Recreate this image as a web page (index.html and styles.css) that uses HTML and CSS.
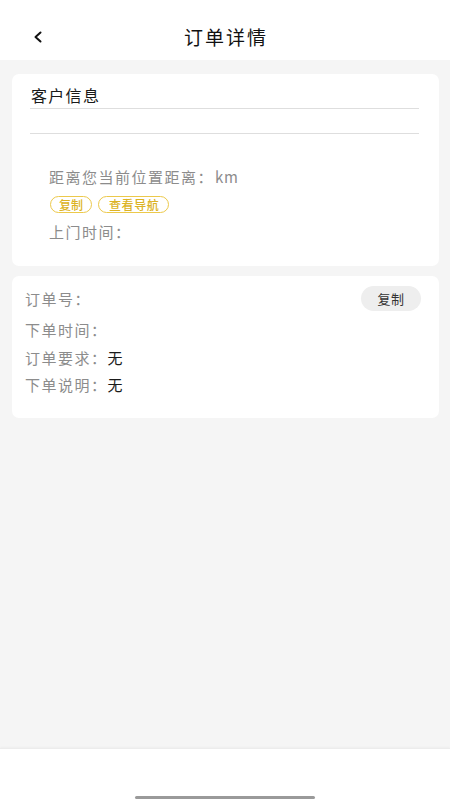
FILE: index.html
```html
<!DOCTYPE html>
<html lang="zh-CN">
<head>
<meta charset="utf-8">
<meta name="viewport" content="width=450, initial-scale=1">
<title>订单详情</title>
<link rel="stylesheet" href="styles.css">
</head>
<body>
<div class="page">
  <header class="topbar">
    <div class="back">
      <svg width="10" height="12" viewBox="0 0 10 12"><path d="M7.5 1.5 L2.5 6 L7.5 10.5" fill="none" stroke="#111" stroke-width="2" stroke-linecap="round" stroke-linejoin="round"/></svg>
    </div>
    <h1 class="title">订单详情</h1>
    <div></div>
  </header>

  <main class="content">
    <section class="card customer">
      <div class="cust-title">客户信息</div>
      <div class="cust-blank"></div>
      <div class="addr">
        <div class="muted line">距离您当前位置距离：<span class="unit">km</span></div>
        <div class="tags">
          <span class="tag">复制</span>
          <span class="tag">查看导航</span>
        </div>
        <div class="muted line visit">上门时间：</div>
      </div>
    </section>

    <section class="card order">
      <div class="row first">
        <span class="muted">订单号：</span>
        <span class="copy-btn">复制</span>
      </div>
      <div class="row"><span class="muted">下单时间：</span></div>
      <div class="row"><span class="muted">订单要求：</span><span class="val">无</span></div>
      <div class="row"><span class="muted">下单说明：</span><span class="val">无</span></div>
    </section>
  </main>

  <footer class="bottom">
    <div class="home-bar"></div>
  </footer>
</div>
</body>
</html>
```

FILE: styles.css
```css
* { box-sizing: border-box; }
html, body { margin: 0; padding: 0; }
body {
  font-family: "Noto Sans CJK SC", "Noto Sans", "Liberation Sans", sans-serif;
  background: #f5f5f5;
  color: #222;
}
.page {
  width: 450px;
  height: 800px;
  display: flex;
  flex-direction: column;
  background: #f5f5f5;
}
.topbar {
  height: 60px;
  padding-top: 14px;
  background: #fff;
  display: grid;
  grid-template-columns: 1fr auto 1fr;
  align-items: center;
  flex-shrink: 0;
}
.back {
  padding-left: 33px;
  display: flex;
  align-items: center;
}
.title {
  margin: 0;
  font-size: 19px;
  font-weight: 400;
  letter-spacing: 2px;
  margin-right: -2px;
  color: #111;
  line-height: 26px;
}
.content {
  flex: 1;
  padding: 14px 11px 0 12px;
  display: flex;
  flex-direction: column;
  gap: 10px;
}
.card {
  background: #fff;
  border-radius: 7px;
}
.customer {
  padding: 10px 20px 23px 18px;
}
.cust-title {
  font-size: 16px;
  line-height: 22px;
  letter-spacing: 1.3px;
  color: #1a1a1a;
  padding-left: 1px;
  padding-bottom: 2px;
  border-bottom: 1px solid #dedede;
}
.cust-blank {
  height: 25px;
  border-bottom: 1px solid #dedede;
}
.addr {
  padding: 32px 0 0 19px;
  display: flex;
  flex-direction: column;
}
.muted {
  color: #8c8c8c;
  font-size: 15px;
  letter-spacing: 1.5px;
}
.unit { letter-spacing: 0.8px; margin-left: 1px; }
.line { line-height: 22px; }
.tags {
  display: flex;
  gap: 6px;
  margin-top: 8px;
  padding-left: 1px;
}
.tag {
  height: 17px;
  line-height: 15px;
  padding: 0 8px;
  border: 1px solid #ecc94b;
  border-radius: 9px;
  color: #dcb324;
  font-size: 12px;
  font-weight: 500;
}
.tag + .tag { padding: 0 9px 0 10px; letter-spacing: 0.6px; }
.visit { margin-top: 8px; }
.order {
  padding: 10px 18px 19px 13px;
}
.row {
  display: flex;
  align-items: center;
  height: 27.5px;
}
.row.first {
  height: 25px;
  justify-content: space-between;
  margin-bottom: 5px;
}
.copy-btn {
  width: 60px;
  height: 25px;
  line-height: 25px;
  text-align: center;
  background: #eeeeee;
  border-radius: 13px;
  color: #333;
  font-size: 13px;
  letter-spacing: 0.5px;
}
.val {
  font-size: 15px;
  color: #1a1a1a;
}
.bottom {
  height: 52px;
  flex-shrink: 0;
  background: #fff;
  border-top: 1px solid #ececec;
  box-shadow: 0 -1px 2px rgba(0,0,0,0.03);
  display: flex;
  justify-content: center;
  align-items: flex-end;
}
.home-bar {
  width: 180px;
  height: 3px;
  background: #9a9a9a;
  border-radius: 2px;
  margin-bottom: 1px;
}
```
